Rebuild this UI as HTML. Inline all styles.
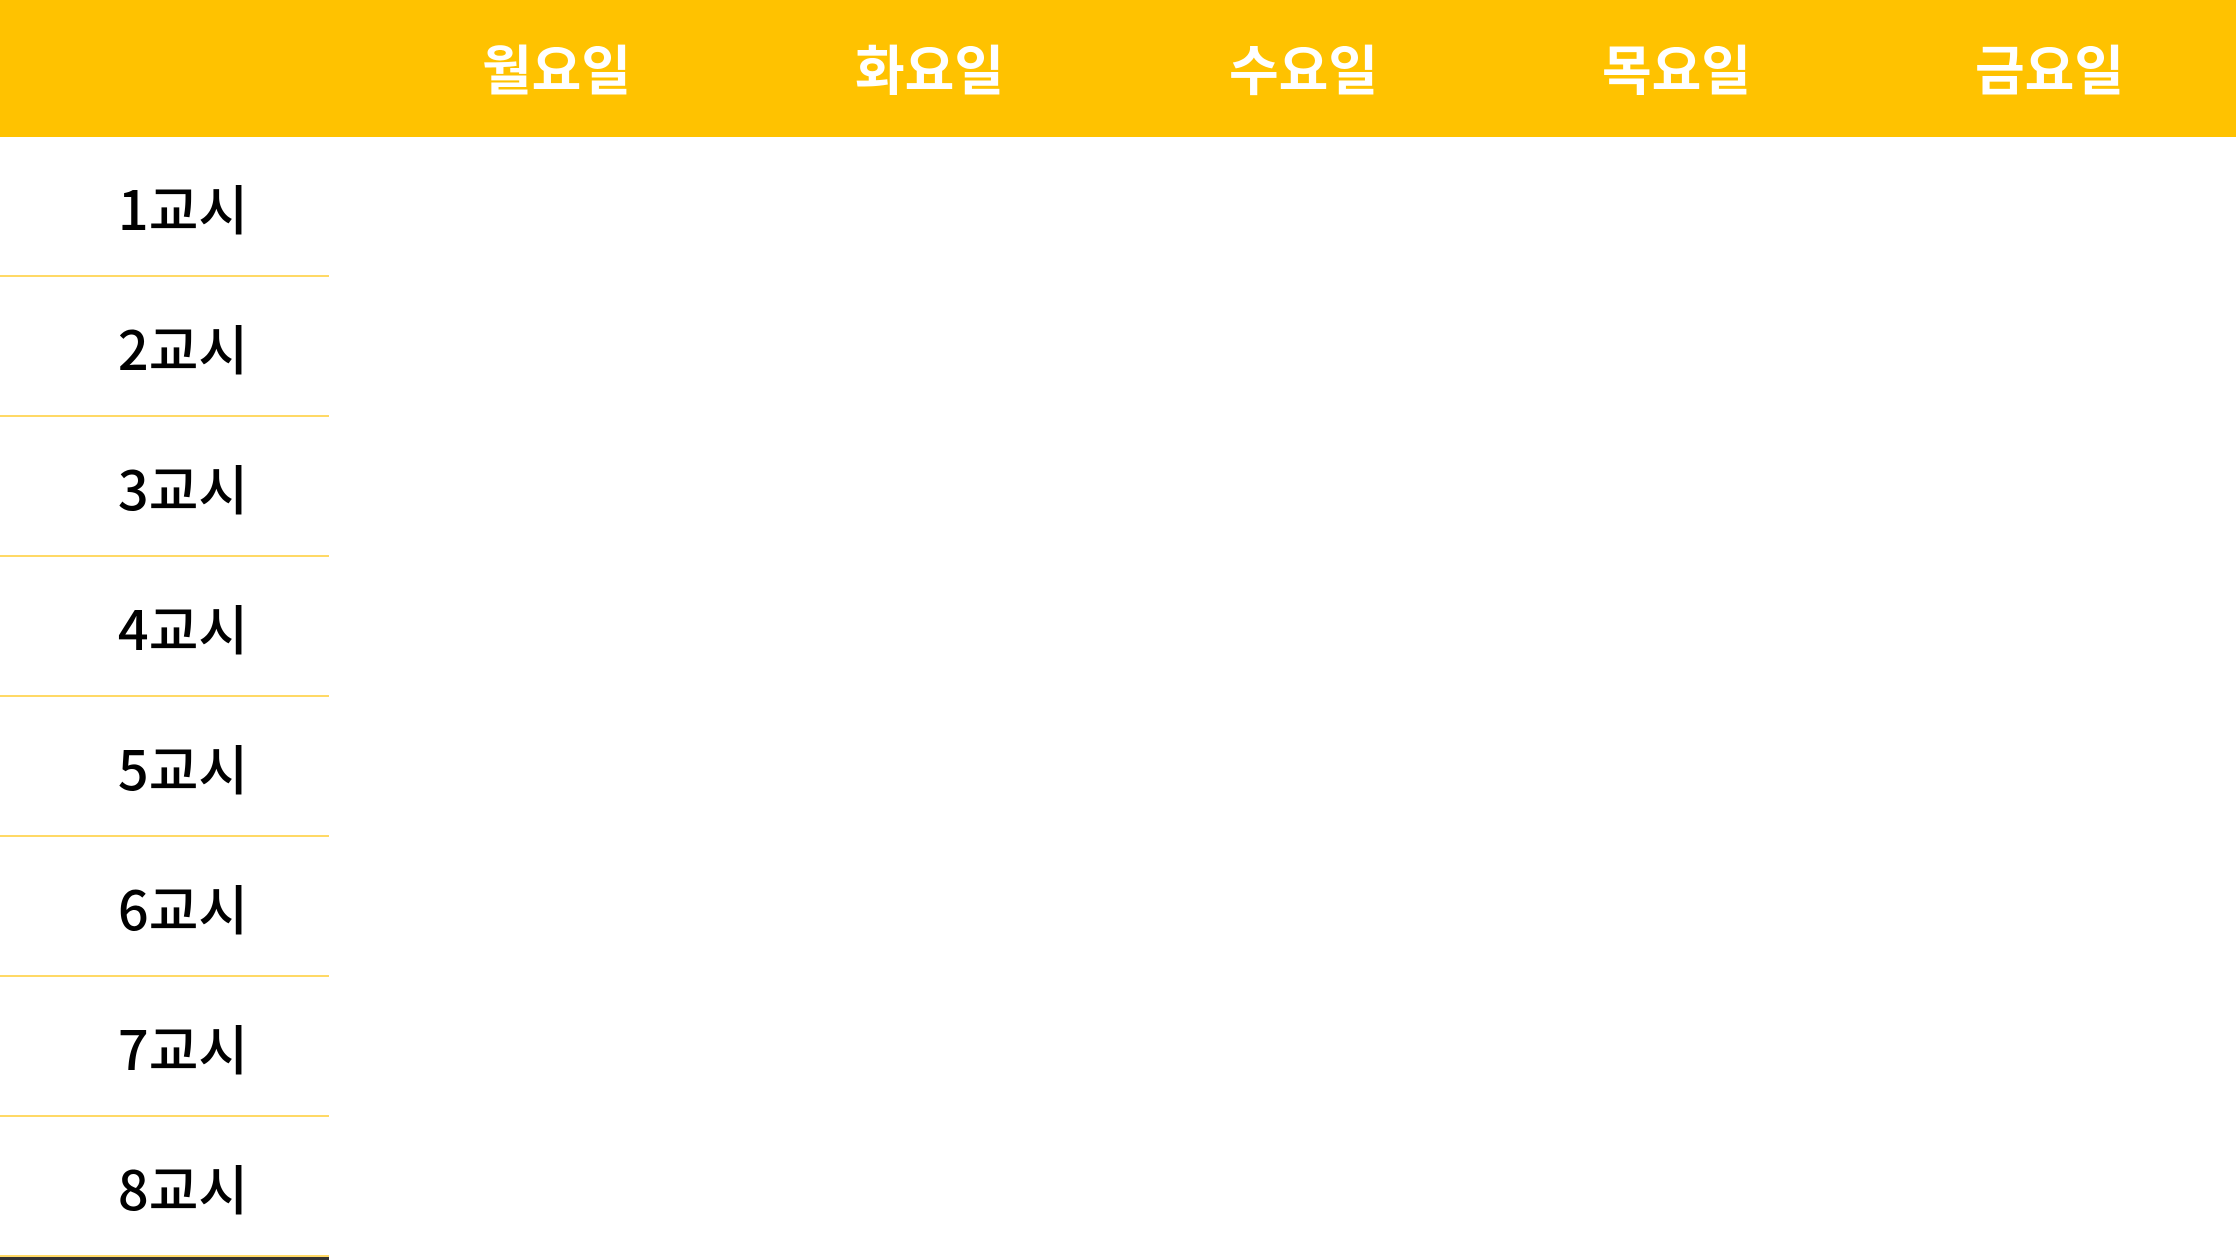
<!DOCTYPE html>
<html><head><meta charset="utf-8"><style>
html,body{margin:0;padding:0;width:2236px;height:1260px;background:#fff;overflow:hidden;font-family:"Liberation Sans","Noto Sans CJK KR","NanumGothic",sans-serif;}
.hdr{position:absolute;left:0;top:0;width:2236px;height:137px;background:#ffc200;}
.day{position:absolute;top:-2px;height:137px;line-height:137px;width:373px;text-align:center;color:#fff;font-size:54px;font-weight:700;font-family:"Noto Sans CJK KR",sans-serif;}
.row{position:absolute;left:0;width:329px;height:140px;border-bottom:2px solid #ffd966;box-sizing:border-box;}
.lbl{position:absolute;left:0;width:366px;text-align:center;color:#000;font-size:54px;font-weight:500;line-height:140px;margin-top:0px;font-family:"Noto Sans CJK KR",sans-serif;}
</style></head><body>
<div class="hdr">
<div class="day" style="left:370px">월요일</div>
<div class="day" style="left:743px">화요일</div>
<div class="day" style="left:1117px">수요일</div>
<div class="day" style="left:1490px">목요일</div>
<div class="day" style="left:1863px">금요일</div>
</div>
<div class="row" style="top:137px"></div><div class="lbl" style="top:137px">1교시</div>
<div class="row" style="top:277px"></div><div class="lbl" style="top:277px">2교시</div>
<div class="row" style="top:417px"></div><div class="lbl" style="top:417px">3교시</div>
<div class="row" style="top:557px"></div><div class="lbl" style="top:557px">4교시</div>
<div class="row" style="top:697px"></div><div class="lbl" style="top:697px">5교시</div>
<div class="row" style="top:837px"></div><div class="lbl" style="top:837px">6교시</div>
<div class="row" style="top:977px"></div><div class="lbl" style="top:977px">7교시</div>
<div class="row" style="top:1117px"></div><div class="lbl" style="top:1117px">8교시</div>
<div style="position:absolute;left:0;top:1257px;width:329px;height:3px;background:#333;"></div>
</body></html>
